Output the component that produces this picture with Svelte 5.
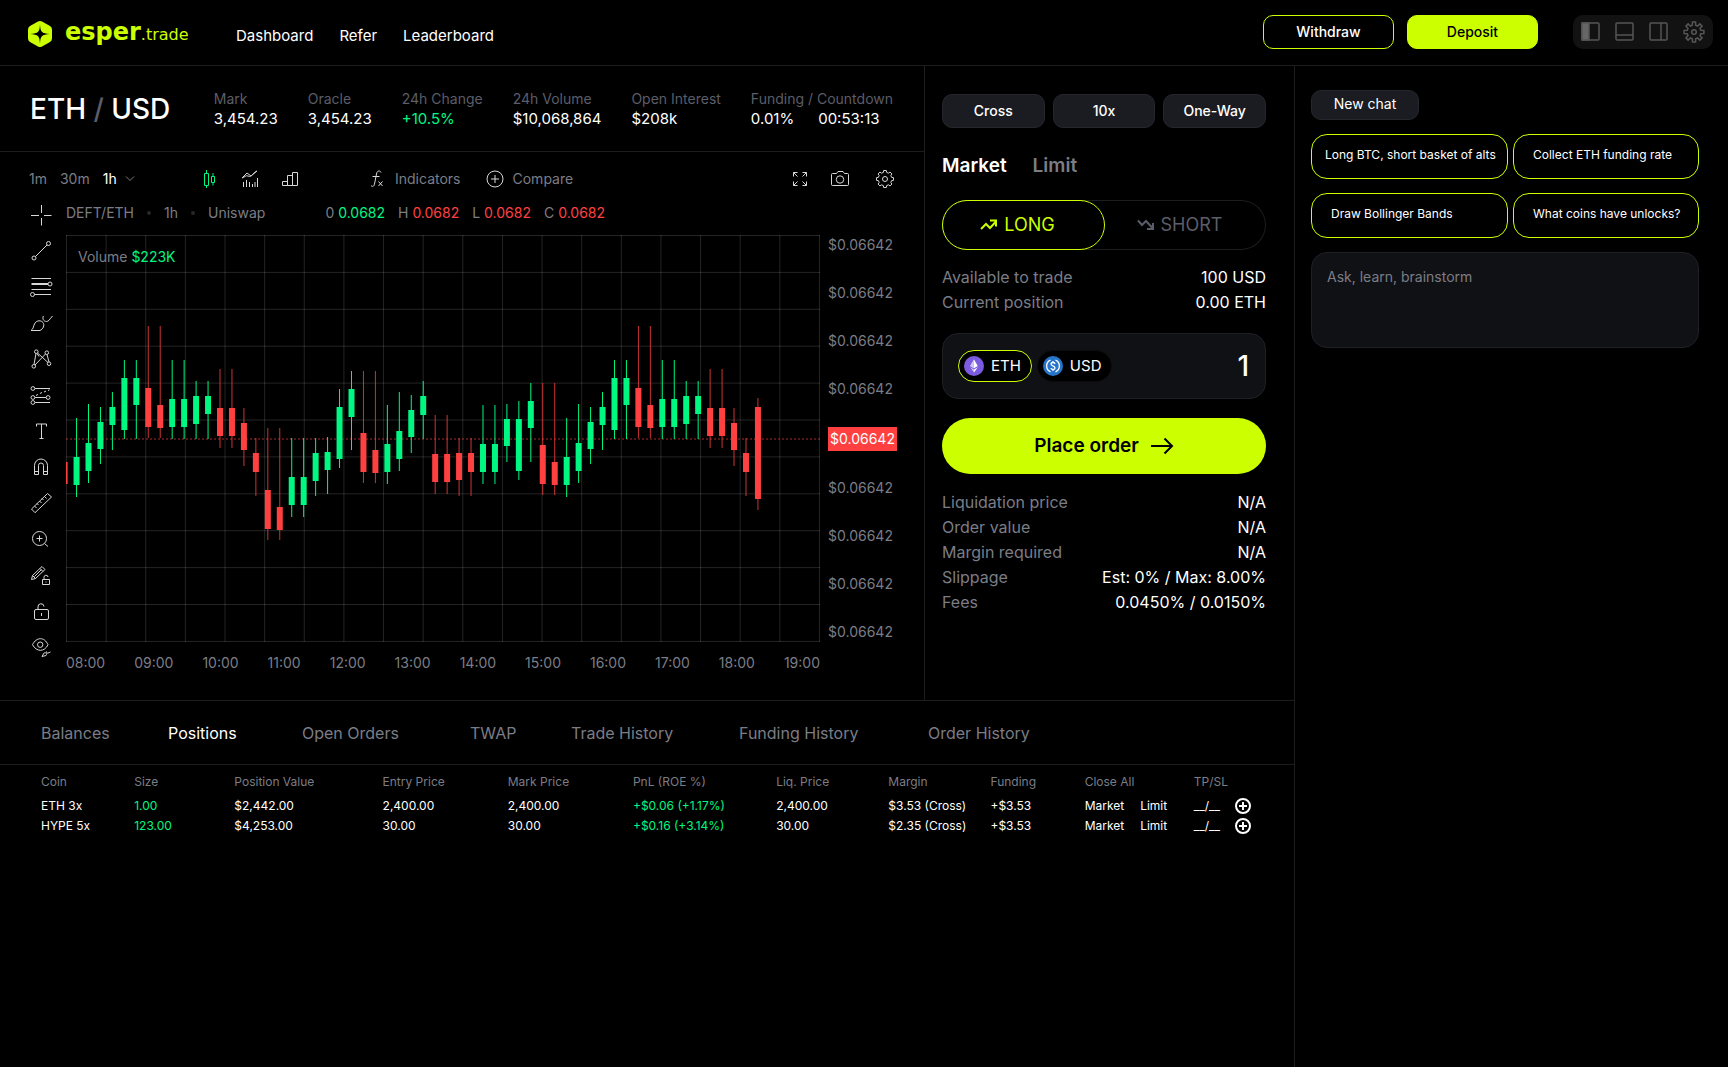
<script>
  let orderType = "Market";
  let side = "long";
  let unit = "ETH";
  let amount = "1";
  let message = "";
  let activeTab = "Positions";

  const links = ["Dashboard", "Refer", "Leaderboard"];

  const stats = [
    { label: "Mark", value: "3,454.23" },
    { label: "Oracle", value: "3,454.23" },
    { label: "24h Change", value: "+10.5%", up: true },
    { label: "24h Volume", value: "$10,068,864" },
    { label: "Open Interest", value: "$208k" },
    { label: "Funding / Countdown", value: "0.01%", extra: "00:53:13" },
  ];

  const ohlc = [
    { key: "0", value: "0.0682", up: true },
    { key: "H", value: "0.0682" },
    { key: "L", value: "0.0682" },
    { key: "C", value: "0.0682" },
  ];

  const tools = [
    { name: "Crosshair", d: "M4 14.5h8M17 14.5h7.5M14.5 4v8M14.5 17v7.5" },
    { name: "Trend line", d: "M8.5 19.5L20 8M5 21a2 2 0 1 0 4 0a2 2 0 1 0-4 0M19.5 6.5a2 2 0 1 0 4 0a2 2 0 1 0-4 0" },
    { name: "Fib retracement", d: "M4.5 5.5h19.5M4.5 10.5h16.5M4.5 11.5h16.5M4.5 16.5h19.5M7.5 21.5h16.5M21 11a2 2 0 1 0 4 0a2 2 0 1 0-4 0M3.5 21.5a2 2 0 1 0 4 0a2 2 0 1 0-4 0" },
    { name: "Brush", d: "M4 21.5c3-2 2-4.5 4-7.5c2-2.7 6-3 8-.5c2 3 0 6.5-3 8zM16.5 7c-1.500 2.5 0 5.5 3 5.5c2 0 3-2 6-5.5" },
    { name: "Pattern", d: "M7 19.5L9 8.5M10.5 8l10.500 9.5M8 20l10.5-11M20 9.5l2 7.5M10 8.5l2 3M7.5 6.7a1.800 1.8 0 1 0 3.6 0a1.8 1.8 0 1 0-3.6 0M18 7.7a1.8 1.8 0 1 0 3.6 0a1.8 1.8 0 1 0-3.6 0M5 21.3a1.8 1.8 0 1 0 3.6 0a1.8 1.8 0 1 0-3.6 0M20.2 18.7a1.8 1.8 0 1 0 3.6 0a1.8 1.8 0 1 0-3.6 0" },
    { name: "Forecast", d: "M8 7.5h15M8 16.5h11M8 21.5h15M9 14.5l2-1M13 12.5l2-1M17 11l2-1M21 9.5l1.5-.7M4 7.5a1.9 1.9 0 1 0 3.8 0a1.9 1.9 0 1 0-3.8 0M4 16.5a1.9 1.9 0 1 0 3.8 0a1.9 1.9 0 1 0-3.8 0M4 21.5a1.9 1.9 0 1 0 3.8 0a1.9 1.9 0 1 0-3.8 0M19.2 16.5a1.9 1.9 0 1 0 3.8 0a1.9 1.9 0 1 0-3.8 0" },
    { name: "Text", d: "M9.5 9.5v-2.500h10v2.5M14.5 7v14.5M12.5 21.5h4" },
    { name: "Magnet", d: "M7.5 21.5v-9a6.5 6.5 0 0 1 13 0v9h-4v-9a2.5 2.5 0 0 0-5 0v9zM7.5 18.5h4M16.5 18.5h4" },
    { name: "Measure", d: "M4.5 20L20.5 4.5l4 3.5L8 23.7zM7.5 17l2 2M10 14.5l1.5 1.5M12.500 12l2 2M15 9.5l1.5 1.5M17.5 7.500l2 2" },
    { name: "Zoom", d: "M5.5 13.5a7 7 0 1 0 14 0a7 7 0 1 0-14 0M17.5 18.5l3.500 3M9.5 13.5h6M12.5 10.5v6" },
    { name: "Lock drawing", d: "M4.5 18.5l1-4L15 5.5l3 3L8.5 17.5zM5.5 14.5l3 3M13 7.5l3 3M7.5 15.5l7-7M15.5 18.5h7v5h-7zM17 18.5v-2a2 2 0 0 1 4-.5M19 20.5v1" },
    { name: "Lock all", d: "M9 12.5h11a1.5 1.5 0 0 1 1.5 1.5v7a1.5 1.5 0 0 1-1.5 1.5H9A1.5 1.5 0 0 1 7.5 21v-7A1.5 1.5 0 0 1 9 12.5zM11 12.5v-2.5a3 3 0 0 1 6-.5M14.5 16v3" },
    { name: "Hide drawings", d: "M5.5 11.7c4-8 12-8 15.5 0c-3.5 7.5-11.5 7.5-15.5 0zM10.5 11.7a2.7 2.7 0 1 0 5.4 0a2.7 2.7 0 1 0-5.4 0M15 23.5l2-3.5c2-1 3.5 1 2 2.5zM19.5 18.5c-.5 2 1 2 4 .5" },
  ];

  // high, body top, body bottom, low, measured down from the top of the plot
  const wave = [
    [183, 222, 250, 262, "up"],
    [169, 208, 236, 248, "up"],
    [172, 187, 214, 229, "up"],
    [157, 172, 190, 215, "up"],
    [125, 143, 195, 204, "up"],
    [125, 143, 170, 204, "up"],
    [91, 153, 192, 203, "down"],
    [91, 170, 193, 203, "down"],
    [125, 164, 192, 204, "up"],
    [125, 164, 192, 204, "up"],
    [146, 161, 189, 204, "up"],
    [146, 161, 179, 204, "up"],
    [134, 173, 201, 213, "down"],
    [134, 173, 201, 213, "down"],
    [173, 188, 215, 231, "down"],
    [203, 218, 237, 261, "down"],
  ];

  const candles = [
    [227, 227, 249, 249, "down"],
    ...wave,
    [193, 255, 294, 305, "down"],
    [193, 272, 295, 305, "down"],
    [203, 242, 270, 282, "up"],
    [203, 242, 270, 282, "up"],
    [203, 218, 246, 261, "up"],
    [202, 217, 235, 259, "up"],
    [154, 172, 224, 233, "up"],
    [136, 154, 182, 215, "up"],
    [136, 198, 237, 248, "down"],
    [136, 215, 238, 248, "down"],
    [170, 209, 237, 249, "up"],
    [157, 196, 224, 236, "up"],
    [160, 175, 202, 218, "up"],
    [146, 161, 180, 204, "up"],
    [180, 219, 247, 259, "down"],
    [180, 219, 247, 259, "down"],
    [203, 218, 245, 261, "down"],
    [203, 218, 237, 261, "down"],
    [170, 209, 237, 249, "up"],
    [170, 209, 237, 249, "up"],
    [169, 184, 211, 227, "up"],
    [166, 184, 236, 245, "up"],
    [148, 166, 193, 227, "up"],
    [148, 210, 249, 260, "down"],
    [148, 227, 250, 260, "down"],
    ...wave,
    [163, 172, 264, 275, "down"],
  ].map(([high, top, bottom, low, dir], i) => ({ x: i * 11.954 - 1.4, high, top, bottom, low, dir }));

  const prices = Array(9).fill("$0.06642");
  const hours = Array.from({ length: 12 }, (_, i) => String(i + 8).padStart(2, "0") + ":00");

  const account = [
    ["Available to trade", "100 USD"],
    ["Current position", "0.00 ETH"],
  ];
  const summary = [
    ["Liquidation price", "N/A"],
    ["Order value", "N/A"],
    ["Margin required", "N/A"],
    ["Slippage", "Est: 0% / Max: 8.00%"],
    ["Fees", "0.0450% / 0.0150%"],
  ];

  const tabs = ["Balances", "Positions", "Open Orders", "TWAP", "Trade History", "Funding History", "Order History"];
  const columns = ["Coin", "Size", "Position Value", "Entry Price", "Mark Price", "PnL (ROE %)", "Liq. Price", "Margin", "Funding", "Close All", "TP/SL"];
  const positions = [
    { coin: "ETH 3x", size: "1.00", value: "$2,442.00", entry: "2,400.00", mark: "2,400.00", pnl: "+$0.06 (+1.17%)", liq: "2,400.00", margin: "$3.53 (Cross)", funding: "+$3.53" },
    { coin: "HYPE 5x", size: "123.00", value: "$4,253.00", entry: "30.00", mark: "30.00", pnl: "+$0.16 (+3.14%)", liq: "30.00", margin: "$2.35 (Cross)", funding: "+$3.53" },
  ];

  const prompts = [
    { text: "Long BTC, short basket of alts", long: true },
    { text: "Collect ETH funding rate" },
    { text: "Draw Bollinger Bands" },
    { text: "What coins have unlocks?" },
  ];

  // outline of a cog with the given number of teeth
  function cog(c, outer, inner, teeth) {
    const points = [];
    for (let i = 0; i < teeth; i++) {
      const a = (i * 2 * Math.PI) / teeth - Math.PI / 2;
      const w = Math.PI / teeth;
      for (const [da, r] of [[-w * 0.62, inner], [-w * 0.4, outer], [w * 0.4, outer], [w * 0.62, inner]]) {
        points.push((c + r * Math.cos(a + da)).toFixed(2) + " " + (c + r * Math.sin(a + da)).toFixed(2));
      }
    }
    return "M" + points.join("L") + "Z";
  }
</script>

<div class="app">
  <header class="topbar">
    <a class="logo" href="/">
      <svg width="24" height="26" viewBox="0 0 24 26">
        <path fill="#cf0" d="M10 .6a4 4 0 0 1 4 0l8 4.400a4 4 0 0 1 2 3.500v9a4 4 0 0 1-2 3.500l-8 4.400a4 4 0 0 1-4 0l-8-4.400a4 4 0 0 1-2-3.500v-9a4 4 0 0 1 2-3.500z" />
        <path fill="#000" d="M12 3c.3 7.500 1.500 9.700 10 10c-8.500.3-9.700 2.500-10 10c-.3-7.500-1.500-9.700-10-10c8.500-.3 9.700-2.500 10-10z" />
      </svg>
      <span class="wordmark">esper<small>.trade</small></span>
    </a>
    <nav>
      {#each links as link}
        <a href="/{link.toLowerCase()}">{link}</a>
      {/each}
    </nav>
    <div class="actions">
      <button class="outline">Withdraw</button>
      <button class="solid">Deposit</button>
    </div>
    <div class="layout-switch">
      <button aria-label="Toggle left panel">
        <svg width="20" height="20" viewBox="0 0 20 20"><rect x="1" y="1" width="17" height="17" rx="1" /><path class="filled" d="M1 1h7v17H1z" /></svg>
      </button>
      <button aria-label="Toggle bottom panel">
        <svg width="20" height="20" viewBox="0 0 20 20"><rect x="1" y="1" width="17" height="17" rx="1" /><path d="M1 13h17" /></svg>
      </button>
      <button aria-label="Toggle right panel">
        <svg width="20" height="20" viewBox="0 0 20 20"><rect x="1" y="1" width="17" height="17" rx="1" /><path d="M12 1v17" /></svg>
      </button>
      <button aria-label="Layout settings">
        <svg width="22" height="22" viewBox="0 0 22 22"><path d={cog(11, 10, 7, 8)} /><circle cx="11" cy="11" r="2.300" /></svg>
      </button>
    </div>
  </header>

  <div class="body">
    <main>
      <div class="trading">
        <section class="market">
          <div class="pair-bar">
            <h1>ETH <span>/</span> USD</h1>
            <dl>
              {#each stats as stat}
                <div>
                  <dt>{stat.label}</dt>
                  <dd class:up={stat.up}>{stat.value}{#if stat.extra}<span>{stat.extra}</span>{/if}</dd>
                </div>
              {/each}
            </dl>
          </div>

          <div class="toolbar">
            <div class="intervals">
              <button>1m</button>
              <button>30m</button>
              <button class="active">1h <svg width="10" height="6" viewBox="0 0 10 6"><path d="M1 .5l4 4l4-4" /></svg></button>
            </div>
            <div class="styles">
              <button aria-label="Candles" class="green">
                <svg width="20" height="20" viewBox="0 0 20 20"><path d="M4.5 4.5h4v12h-4zM6.5 1v3.5M6.5 16.5V19M11.500 7.5h3v6h-3zM13 4v3.5M13 13.5v3" /></svg>
              </button>
              <button aria-label="Indicators overlay">
                <svg width="20" height="20" viewBox="0 0 20 20"><path d="M2 9l5-5l4 3l6-5M2 9c3-1 4-3 6-2c4 2 4-3 9-5M3.5 18v-5M6.5 18v-7M9.5 18v-5M12.5 18v-3M15 18v-5M17.5 18v-9" /></svg>
              </button>
              <button aria-label="Volume bars">
                <svg width="20" height="20" viewBox="0 0 20 20"><path d="M2.5 12.5h5v4h-5zM7.5 6.5h5v10h-5zM12.5 3.5h5v13h-5z" /></svg>
              </button>
            </div>
            <button class="labelled">
              <svg width="18" height="20" viewBox="0 0 18 20"><path d="M13 3.500c-1-2.500-4-2-4.500 1.500l-2 10c-.5 2.500-2 3-3.500 1.500M4.500 7.500h7M10.500 12.500l4 4.500M14.500 12.500l-4 4.500" /></svg>
              Indicators
            </button>
            <button class="labelled compare">
              <svg width="18" height="18" viewBox="0 0 18 18"><circle cx="9" cy="9" r="8" /><path d="M9 5v8M5 9h8" /></svg>
              Compare
            </button>
            <div class="views">
              <button aria-label="Full screen">
                <svg width="20" height="20" viewBox="0 0 20 20"><path d="M3.5 7.5v-4h4M3.500 3.5l4 4M16.5 7.5v-4h-4M16.5 3.5l-4 4M3.5 12.5v4h4M3.500 16.5l4-4M16.5 12.5v4h-4M16.5 16.5l-4-4" /></svg>
              </button>
              <button aria-label="Take a snapshot">
                <svg width="20" height="20" viewBox="0 0 20 20"><path d="M1.5 5.5a1 1 0 0 1 1-1h4l1.5-2h5l1.500 2h3a1 1 0 0 1 1 1v10a1 1 0 0 1-1 1h-15a1 1 0 0 1-1-1z" /><circle cx="10" cy="10.5" r="3.7" /></svg>
              </button>
              <button aria-label="Chart settings">
                <svg width="20" height="20" viewBox="0 0 20 20"><path stroke-linejoin="round" d={cog(10, 8.6, 6.8, 8)} /><circle cx="10" cy="10" r="2.5" /></svg>
              </button>
            </div>
          </div>

          <div class="chart">
            <div class="rail">
              {#each tools as tool}
                <button aria-label={tool.name}>
                  <svg width="28" height="28" viewBox="0 0 28 28"><path d={tool.d} /></svg>
                </button>
              {/each}
            </div>
            <div class="plot-area">
              <div class="legend">
                <span>DEFT/ETH</span><i></i><span>1h</span><i></i><span>Uniswap</span>
                <div class="ohlc">
                  {#each ohlc as item}
                    <span>{item.key} <b class:up={item.up}>{item.value}</b></span>
                  {/each}
                </div>
              </div>
              <div class="plot-row">
                <div class="plot">
                  <svg viewBox="0 0 754 407" preserveAspectRatio="none">
                    {#each Array(20) as _, i}
                      <line class="grid" x1={0.5 + i * 39.63} x2={0.5 + i * 39.63} y1="0" y2="407" />
                    {/each}
                    {#each Array(12) as _, i}
                      <line class="grid" x1="0" x2="754" y1={0.5 + i * 36.9} y2={0.5 + i * 36.9} />
                    {/each}
                    <line class="last" x1="0" x2="754" y1="204" y2="204" />
                    {#each candles as c}
                      <line class={c.dir} x1={c.x} x2={c.x} y1={c.high} y2={c.low} />
                      <rect class={c.dir} x={c.x - 3} y={c.top} width="6" height={c.bottom - c.top} />
                    {/each}
                  </svg>
                  <p class="volume">Volume <b>$223K</b></p>
                </div>
                <div class="prices">
                  {#each prices as price, i}
                    <span class:tag={i === 4}>{price}</span>
                  {/each}
                </div>
              </div>
              <div class="hours">
                {#each hours as hour}
                  <span>{hour}</span>
                {/each}
              </div>
            </div>
          </div>
        </section>

        <section class="order">
          <div class="modes">
            <button>Cross</button>
            <button>10x</button>
            <button>One-Way</button>
          </div>
          <div class="order-types">
            {#each ["Market", "Limit"] as type}
              <button class:active={orderType === type} on:click={() => (orderType = type)}>{type}</button>
            {/each}
          </div>
          <div class="sides">
            <button class:active={side === "long"} on:click={() => (side = "long")}>
              <svg width="18" height="12" viewBox="0 0 18 12"><path d="M1 10l5-5l4 4l6-6.500M10 1.500h6v6" /></svg>
              LONG
            </button>
            <button class:active={side === "short"} on:click={() => (side = "short")}>
              <svg width="18" height="12" viewBox="0 0 18 12"><path d="M1 1.500l4 4.500l4-4l7 7.500M10 10h6V4" /></svg>
              SHORT
            </button>
          </div>
          <dl class="rows">
            {#each account as [label, value]}
              <div><dt>{label}</dt><dd>{value}</dd></div>
            {/each}
          </dl>
          <div class="amount">
            <button class:active={unit === "ETH"} on:click={() => (unit = "ETH")}>
              <svg width="20" height="20" viewBox="0 0 20 20">
                <circle cx="10" cy="10" r="10" fill="#7b5be0" />
                <path fill="#fff" d="M10 3.500l3.800 6.600L10 12.300l-3.800-2.200z" />
                <path fill="#cdbff7" d="M10 3.500v8.800l-3.800-2.200zM6.200 11.200l3.800 2.200v3.100z" />
                <path fill="#fff" d="M13.800 11.200L10 13.400v3.100z" />
              </svg>
              ETH
            </button>
            <button class:active={unit === "USD"} on:click={() => (unit = "USD")}>
              <svg width="20" height="20" viewBox="0 0 20 20" fill="none" stroke="#fff">
                <circle cx="10" cy="10" r="10" fill="#2775ca" stroke="none" />
                <path stroke-width="1.300" d="M7.500 4.200a6.300 6.300 0 0 0 0 11.600M12.500 4.200a6.300 6.300 0 0 1 0 11.600M12 8c-.3-2-4-2-4 0c0 2.200 4 1.500 4 4c0 2-3.900 2-4 0M10 5v1.500M10 13.500V15" />
              </svg>
              USD
            </button>
            <input type="text" inputmode="decimal" aria-label="Amount" bind:value={amount} />
          </div>
          <button class="place">
            Place order
            <svg width="24" height="18" viewBox="0 0 24 18"><path d="M1 9h21M14.500 1.500L22 9l-7.500 7.500" /></svg>
          </button>
          <dl class="rows">
            {#each summary as [label, value]}
              <div><dt>{label}</dt><dd>{value}</dd></div>
            {/each}
          </dl>
        </section>
      </div>

      <section class="positions">
        <div class="tabs">
          {#each tabs as tab}
            <button class:active={activeTab === tab} on:click={() => (activeTab = tab)}>{tab}</button>
          {/each}
        </div>
        <table>
          <thead>
            <tr>
              {#each columns as column}
                <th scope="col">{column}</th>
              {/each}
            </tr>
          </thead>
          <tbody>
            {#each positions as p}
              <tr>
                <td>{p.coin}</td>
                <td class="up">{p.size}</td>
                <td>{p.value}</td>
                <td>{p.entry}</td>
                <td>{p.mark}</td>
                <td class="up">{p.pnl}</td>
                <td>{p.liq}</td>
                <td>{p.margin}</td>
                <td>{p.funding}</td>
                <td><div class="close"><button>Market</button><button>Limit</button></div></td>
                <td>
                  <div class="tpsl">
                    __/__
                    <button aria-label="Add TP/SL">
                      <svg width="16" height="16" viewBox="0 0 16 16"><circle cx="8" cy="8" r="7" /><path d="M8 4v8M4 8h8" /></svg>
                    </button>
                  </div>
                </td>
              </tr>
            {/each}
          </tbody>
        </table>
      </section>
    </main>

    <aside>
      <button class="new-chat">New chat</button>
      <div class="prompts">
        {#each prompts as prompt}
          <button class:long={prompt.long} on:click={() => (message = prompt.text)}>{prompt.text}</button>
        {/each}
      </div>
      <textarea aria-label="Message" placeholder="Ask, learn, brainstorm" bind:value={message}></textarea>
    </aside>
  </div>
</div>

<style>
  :global(body) {
    margin: 0;
    background: #000;
  }
  .app {
    --line: #1d1d20;
    --lime: #ccff00;
    --green: #00f782;
    --red: #ff4040;
    --dim: #5b5d68;
    --muted: #7b7d86;
    display: flex;
    flex-direction: column;
    min-height: 100vh;
    background: #000;
    color: #fff;
    font-family: Inter, "Liberation Sans", sans-serif;
    font-size: 16px;
    line-height: 20px;
  }
  .app * {
    box-sizing: border-box;
  }
  button {
    display: flex;
    align-items: center;
    justify-content: center;
    padding: 0;
    border: none;
    background: none;
    color: inherit;
    font: inherit;
    white-space: nowrap;
    cursor: pointer;
  }
  a {
    color: inherit;
    text-decoration: none;
  }
  svg {
    flex: none;
  }
  dl,
  dd,
  p,
  h1 {
    margin: 0;
  }
  b {
    font-weight: 400;
  }
  .up {
    color: var(--green);
  }

  /* top bar */
  .topbar {
    display: flex;
    align-items: center;
    height: 66px;
    padding: 0 15px 2px 28px;
    border-bottom: 1px solid var(--line);
  }
  .logo {
    display: flex;
    align-items: center;
    gap: 13px;
    width: 208px;
    padding-top: 4px;
  }
  .wordmark {
    color: var(--lime);
    font-family: "DejaVu Sans", sans-serif;
    font-size: 24px;
    font-weight: 700;
    white-space: nowrap;
  }
  .wordmark small {
    font-size: 16px;
    font-weight: 400;
  }
  nav {
    display: flex;
    gap: 26px;
    padding-top: 8px;
    font-size: 15px;
  }
  .actions {
    display: flex;
    gap: 13px;
    margin: 0 35px 0 auto;
    font-size: 14px;
    font-weight: 500;
  }
  .actions button {
    width: 131px;
    height: 34px;
    border: 1px solid var(--lime);
    border-radius: 10px;
  }
  .actions .solid {
    background: var(--lime);
    color: #000;
  }
  .layout-switch {
    display: flex;
    align-items: center;
    gap: 14px;
    height: 34px;
    padding: 0 8px;
    border-radius: 10px;
    background: #121212;
  }
  .layout-switch svg {
    fill: none;
    stroke: #555;
    stroke-width: 1.5;
  }
  .layout-switch .filled {
    fill: #666;
  }

  .body {
    display: flex;
    flex: 1;
  }
  main {
    display: flex;
    flex: 1;
    flex-direction: column;
    min-width: 0;
  }
  .trading {
    display: flex;
    border-bottom: 1px solid var(--line);
  }
  .market {
    flex: 1;
    min-width: 0;
    border-right: 1px solid var(--line);
  }

  /* pair */
  .pair-bar {
    display: flex;
    align-items: center;
    justify-content: space-between;
    height: 86px;
    padding: 0 31px 0 30px;
    border-bottom: 1px solid var(--line);
  }
  h1 {
    font-size: 28px;
    font-weight: 500;
    line-height: 32px;
    white-space: nowrap;
  }
  h1 span {
    color: var(--dim);
  }
  .pair-bar dl {
    display: flex;
    gap: 30px;
    font-size: 15px;
    white-space: nowrap;
  }
  .pair-bar dt {
    color: var(--dim);
    font-size: 14px;
  }
  .pair-bar dd span {
    margin-left: 24px;
  }

  /* chart */
  .toolbar {
    display: flex;
    align-items: center;
    height: 36px;
    margin-top: 9px;
    padding: 0 29px;
    color: var(--muted);
    font-size: 14px;
  }
  .toolbar svg,
  .rail svg {
    fill: none;
    stroke: #d8d8d8;
    stroke-width: 1;
  }
  .intervals {
    display: flex;
    gap: 13px;
    width: 171px;
  }
  .intervals .active {
    gap: 8px;
    color: #fff;
  }
  .intervals svg {
    stroke: var(--muted);
  }
  .styles {
    display: flex;
    gap: 20px;
    width: 168px;
  }
  .styles .green svg {
    stroke: var(--green);
  }
  .labelled {
    gap: 9px;
  }
  .compare {
    margin-left: 25px;
  }
  .views {
    display: flex;
    gap: 20px;
    margin-left: auto;
  }
  .views button:last-child {
    margin-left: 5px;
  }
  .chart {
    display: flex;
    gap: 11px;
    padding: 0 27px 27px 27px;
  }
  .rail {
    display: flex;
    flex-direction: column;
    width: 28px;
  }
  .rail button {
    height: 36px;
  }
  .plot-area {
    flex: 1;
    min-width: 0;
    color: var(--muted);
    font-size: 14px;
  }
  .legend {
    display: flex;
    align-items: center;
    height: 32px;
    margin-bottom: 6px;
  }
  .legend i {
    width: 4px;
    height: 4px;
    margin: 0 13px;
    border-radius: 50%;
    background: #26272c;
  }
  .ohlc {
    display: flex;
    gap: 13px;
    margin-left: 60px;
  }
  .ohlc b {
    color: var(--red);
  }
  .ohlc b.up {
    color: var(--green);
  }
  .plot-row {
    display: flex;
    gap: 8px;
  }
  .plot {
    position: relative;
    flex: 1;
    height: 407px;
  }
  .plot svg {
    display: block;
    width: 100%;
    height: 100%;
  }
  .grid {
    stroke: #fff;
    stroke-opacity: 0.14;
  }
  .last {
    stroke: var(--red);
    stroke-dasharray: 2 2;
    stroke-opacity: 0.65;
  }
  line.up {
    stroke: var(--green);
  }
  line.down {
    stroke: var(--red);
    stroke-opacity: 0.8;
  }
  rect.up {
    fill: var(--green);
  }
  rect.down {
    fill: var(--red);
  }
  .volume {
    position: absolute;
    top: 12px;
    left: 12px;
  }
  .volume b {
    color: var(--green);
  }
  .prices {
    display: flex;
    flex-direction: column;
    justify-content: space-between;
    width: 69px;
  }
  .prices .tag {
    padding: 2px 0;
    background: var(--red);
    color: #fff;
    text-align: center;
  }
  .hours {
    display: flex;
    justify-content: space-between;
    margin: 11px 77px 0 0;
  }

  /* order form */
  .order {
    display: flex;
    flex-direction: column;
    width: 369px;
    padding: 28px 28px 0 17px;
  }
  .modes {
    display: grid;
    grid-template-columns: repeat(3, 1fr);
    gap: 8px;
    font-size: 14px;
    font-weight: 500;
  }
  .modes button,
  .new-chat {
    height: 34px;
    border: 1px solid #26272c;
    border-radius: 10px;
    background: #1b1c21;
  }
  .order-types {
    display: flex;
    gap: 26px;
    margin: 28px 0 24px;
    color: var(--muted);
    font-size: 19px;
    font-weight: 600;
  }
  .order-types .active {
    color: #fff;
  }
  .sides {
    display: flex;
    margin-bottom: 15px;
    border-radius: 26px;
    box-shadow: inset 0 0 0 1px var(--line);
    color: var(--dim);
    font-size: 18px;
  }
  .sides button {
    flex: 1;
    gap: 6px;
    height: 50px;
    border-radius: 25px;
    padding-right: 12px;
  }
  .sides .active {
    border: 1px solid var(--lime);
    color: var(--lime);
  }
  .sides svg,
  .place svg {
    fill: none;
    stroke: currentColor;
    stroke-width: 2;
  }
  .rows div {
    display: flex;
    justify-content: space-between;
    line-height: 25px;
  }
  .rows dt {
    color: var(--muted);
  }
  .amount {
    display: flex;
    align-items: center;
    gap: 5px;
    height: 66px;
    margin: 18px 0 19px;
    padding: 0 16px 0 15px;
    border: 1px solid #1f2024;
    border-radius: 16px;
    background: #101115;
  }
  .amount button {
    gap: 7px;
    height: 32px;
    padding: 0 10px 0 5px;
    border: 1px solid #0b0b0d;
    border-radius: 16px;
    background: #000;
    font-size: 15px;
  }
  .amount button.active {
    border-color: var(--lime);
  }
  .amount input {
    flex: 1;
    min-width: 0;
    padding: 0;
    border: none;
    outline: none;
    background: none;
    color: #fff;
    font: 500 28px Inter, sans-serif;
    text-align: right;
  }
  .place {
    gap: 11px;
    height: 56px;
    margin-bottom: 16px;
    border-radius: 28px;
    background: var(--lime);
    color: #000;
    font-size: 19px;
    font-weight: 600;
  }

  /* positions */
  .tabs {
    display: grid;
    grid-template-columns: 127px 134px 168px 101px 168px 189px auto;
    justify-items: start;
    height: 64px;
    padding-left: 41px;
    border-bottom: 1px solid var(--line);
    color: var(--muted);
  }
  .tabs .active {
    color: #fff;
  }
  table {
    width: 100%;
    margin-top: 7px;
    border-collapse: collapse;
    table-layout: fixed;
    font-size: 12px;
  }
  th,
  td {
    width: 100px;
    height: 20px;
    padding: 0;
    font-weight: 400;
    text-align: left;
    white-space: nowrap;
  }
  th {
    height: 24px;
    padding-bottom: 4px;
    color: var(--muted);
  }
  th:first-child {
    width: 134px;
  }
  th:first-child,
  td:first-child {
    padding-left: 41px;
  }
  th:nth-child(3) {
    width: 148px;
  }
  th:nth-child(4),
  th:nth-child(5) {
    width: 125px;
  }
  th:nth-child(6) {
    width: 143px;
  }
  th:nth-child(7) {
    width: 112px;
  }
  th:nth-child(8) {
    width: 102px;
  }
  th:nth-child(9) {
    width: 94px;
  }
  th:nth-child(10) {
    width: 109px;
  }
  .close {
    display: flex;
    gap: 16px;
  }
  .tpsl {
    display: flex;
    align-items: center;
    gap: 15px;
  }
  .tpsl svg {
    fill: none;
    stroke: #fff;
    stroke-width: 2;
  }

  /* chat */
  aside {
    width: 434px;
    padding: 24px 29px 0 16px;
    border-left: 1px solid var(--line);
  }
  .new-chat {
    width: 108px;
    height: 30px;
    padding-bottom: 2px;
    font-size: 14px;
  }
  .prompts {
    display: grid;
    grid-template-columns: 197fr 186fr;
    gap: 14px 5px;
    margin: 14px 0;
    font-size: 12px;
  }
  .prompts button {
    justify-content: flex-start;
    height: 45px;
    padding: 0 0 3px 19px;
    border: 1px solid var(--lime);
    border-radius: 16px;
  }
  .prompts .long {
    padding-left: 13px;
  }
  textarea {
    display: block;
    width: 100%;
    height: 96px;
    padding: 14px 15px;
    border: 1px solid #1f2024;
    border-radius: 16px;
    outline: none;
    background: #101115;
    color: #fff;
    font: 14px/20px Inter, sans-serif;
    resize: none;
  }
  textarea::placeholder {
    color: var(--muted);
    opacity: 1;
  }
</style>
